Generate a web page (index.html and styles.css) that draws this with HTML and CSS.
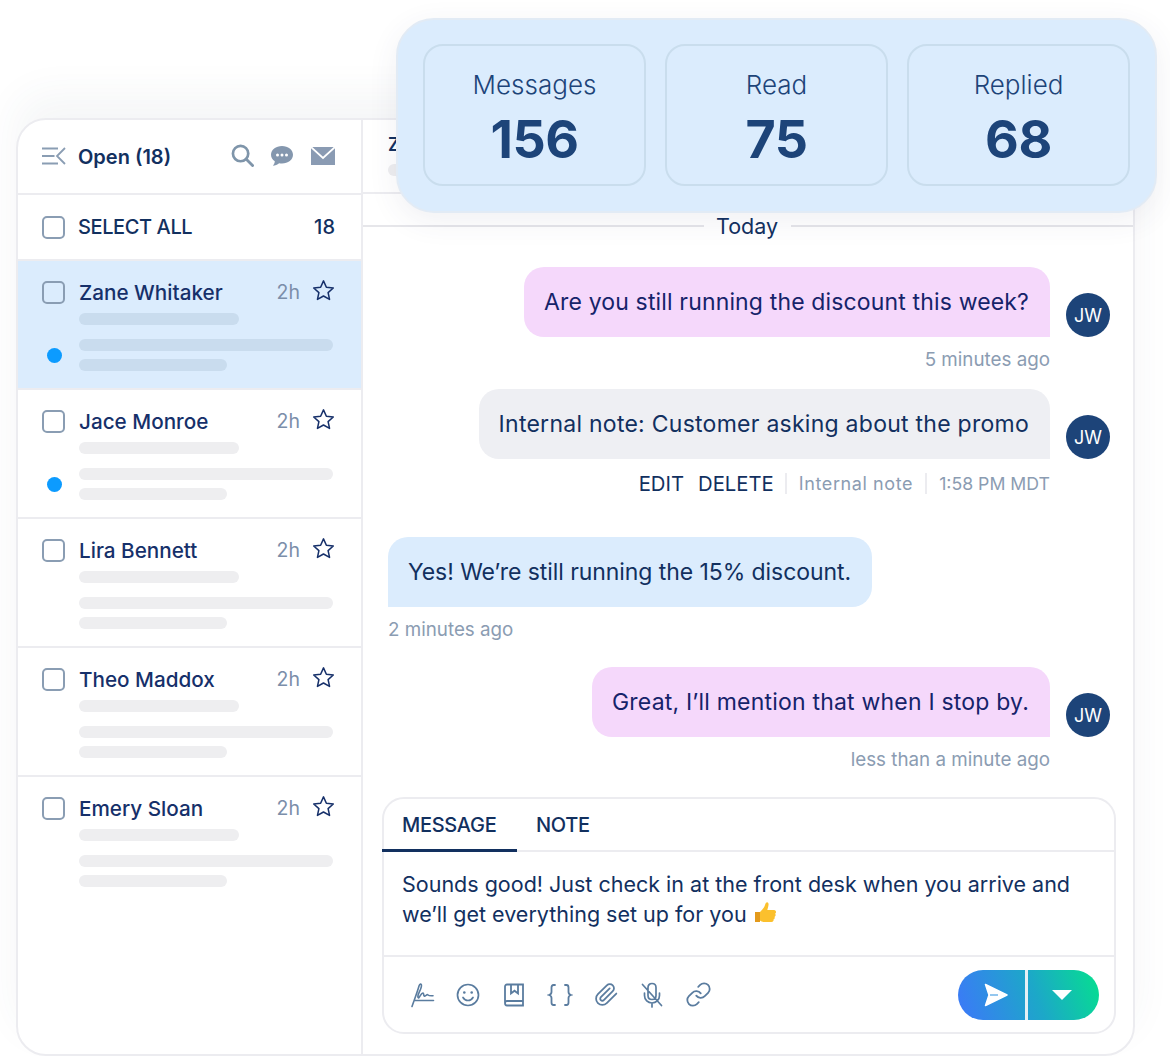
FILE: index.html
```html
<!DOCTYPE html>
<html lang="en">
<head>
<meta charset="utf-8">
<title>Inbox</title>
<link rel="stylesheet" href="styles.css">
</head>
<body>
<div class="page">
  <section class="stats">
    <div class="stat"><div class="stat-label">Messages</div><div class="stat-num">156</div></div>
    <div class="stat"><div class="stat-label">Read</div><div class="stat-num">75</div></div>
    <div class="stat"><div class="stat-label">Replied</div><div class="stat-num">68</div></div>
  </section>
  <main class="frame">
    <aside class="side">
      <header class="side-head">
        <svg class="ic-menu" viewBox="0 0 24 18" width="24" height="18"><path d="M0 1.500h16M0 9h12.500M0 16.500h16M23 1l-8 8 8 8" fill="none" stroke="#8a9db3" stroke-width="1.800"/></svg>
        <span class="open">Open (18)</span>
        <svg class="ic-search" viewBox="0 0 24 24" width="23" height="23"><circle cx="10" cy="10" r="8" fill="none" stroke="#7f95aa" stroke-width="2.800"/><path d="M16 16l6.500 6.500" stroke="#7f95aa" stroke-width="3" stroke-linecap="round"/></svg>
        <svg class="ic-chat" viewBox="0 0 24 22" width="24" height="22"><path d="M12 1C5.900 1 1 4.900 1 9.700c0 2.600 1.500 5 3.800 6.600-.1 1.700-.9 3.300-1.900 4.500 2.300-.2 4.500-1.200 6.200-2.600.9.200 1.900.3 2.900.3 6.100 0 11-3.900 11-8.800S18.100 1 12 1z" fill="#8497ae"/><circle cx="7.500" cy="10" r="1.500" fill="#fff"/><circle cx="12" cy="10" r="1.500" fill="#fff"/><circle cx="16.500" cy="10" r="1.500" fill="#fff"/></svg>
        <svg class="ic-mail" viewBox="0 0 24 18" width="24" height="18"><path d="M0 0h24v18H0z" fill="#8a9bb3"/><path d="M0 0l12 11L24 0" fill="none" stroke="#fff" stroke-width="1.800"/></svg>
      </header>
      <div class="select-all">
        <span class="check"></span>
        <span class="select-label">SELECT ALL</span>
        <span class="select-count">18</span>
      </div>
      <article class="item item-active">
        <div class="item-left"><span class="check"></span><span class="dot"></span></div>
        <div class="item-body">
          <div class="item-top"><span class="name">Zane Whitaker</span><span class="age">2h</span><svg class="star" viewBox="0 0 24 24" width="23" height="23"><path d="M12 2l3 6.600 7.200.8-5.400 4.800 1.500 7.100L12 17.700l-6.300 3.600 1.500-7.100L1.800 9.400 9 8.600z" fill="none" stroke="#16306a" stroke-width="1.600" stroke-linejoin="round"/></svg></div>
          <div class="bar bar-a"></div><div class="bar bar-b"></div><div class="bar bar-c"></div>
        </div>
      </article>
      <article class="item">
        <div class="item-left"><span class="check"></span><span class="dot"></span></div>
        <div class="item-body">
          <div class="item-top"><span class="name">Jace Monroe</span><span class="age">2h</span><svg class="star" viewBox="0 0 24 24" width="23" height="23"><path d="M12 2l3 6.600 7.200.8-5.400 4.800 1.500 7.100L12 17.700l-6.300 3.600 1.500-7.100L1.800 9.400 9 8.600z" fill="none" stroke="#16306a" stroke-width="1.600" stroke-linejoin="round"/></svg></div>
          <div class="bar bar-a"></div><div class="bar bar-b"></div><div class="bar bar-c"></div>
        </div>
      </article>
      <article class="item">
        <div class="item-left"><span class="check"></span></div>
        <div class="item-body">
          <div class="item-top"><span class="name">Lira Bennett</span><span class="age">2h</span><svg class="star" viewBox="0 0 24 24" width="23" height="23"><path d="M12 2l3 6.600 7.200.8-5.400 4.800 1.500 7.100L12 17.700l-6.300 3.600 1.500-7.100L1.800 9.400 9 8.600z" fill="none" stroke="#16306a" stroke-width="1.600" stroke-linejoin="round"/></svg></div>
          <div class="bar bar-a"></div><div class="bar bar-b"></div><div class="bar bar-c"></div>
        </div>
      </article>
      <article class="item">
        <div class="item-left"><span class="check"></span></div>
        <div class="item-body">
          <div class="item-top"><span class="name">Theo Maddox</span><span class="age">2h</span><svg class="star" viewBox="0 0 24 24" width="23" height="23"><path d="M12 2l3 6.600 7.200.8-5.400 4.800 1.500 7.100L12 17.700l-6.300 3.600 1.500-7.100L1.800 9.400 9 8.600z" fill="none" stroke="#16306a" stroke-width="1.600" stroke-linejoin="round"/></svg></div>
          <div class="bar bar-a"></div><div class="bar bar-b"></div><div class="bar bar-c"></div>
        </div>
      </article>
      <article class="item item-last">
        <div class="item-left"><span class="check"></span></div>
        <div class="item-body">
          <div class="item-top"><span class="name">Emery Sloan</span><span class="age">2h</span><svg class="star" viewBox="0 0 24 24" width="23" height="23"><path d="M12 2l3 6.600 7.200.8-5.400 4.800 1.500 7.100L12 17.700l-6.300 3.600 1.500-7.100L1.800 9.400 9 8.600z" fill="none" stroke="#16306a" stroke-width="1.600" stroke-linejoin="round"/></svg></div>
          <div class="bar bar-a"></div><div class="bar bar-b"></div><div class="bar bar-c"></div>
        </div>
      </article>
    </aside>
    <section class="chat">
      <header class="chat-head"><div class="chat-name">Z</div><div class="bar chat-bar"></div></header>
      <div class="today"><span class="today-label">Today</span></div>
      <div class="thread">
        <div class="row row-first">
          <div class="bubble bubble-out">Are you still running the discount this week?</div>
          <div class="avatar">JW</div>
        </div>
        <div class="time time-out">5 minutes ago</div>
        <div class="row row-note">
          <div class="bubble bubble-note">Internal note: Customer asking about the promo</div>
          <div class="avatar">JW</div>
        </div>
        <div class="meta">
          <span class="meta-link">EDIT</span><span class="meta-link meta-delete">DELETE</span>
          <span class="meta-info meta-note">Internal note</span><span class="meta-info meta-clock">1:58 PM MDT</span>
        </div>
        <div class="row row-in">
          <div class="bubble bubble-in">Yes! We’re still running the 15% discount.</div>
        </div>
        <div class="time">2 minutes ago</div>
        <div class="row row-last">
          <div class="bubble bubble-out">Great, I’ll mention that when I stop by.</div>
          <div class="avatar">JW</div>
        </div>
        <div class="time time-out">less than a minute ago</div>
      </div>
      <div class="composer">
        <div class="tabs"><span class="tab tab-active">MESSAGE</span><span class="tab">NOTE</span></div>
        <div class="draft">Sounds good! Just check in at the front desk when you arrive and<br>we’ll get everything set up for you <svg class="thumb" viewBox="0 0 24 24" width="24" height="24"><path d="M2 11h5v10H2z" fill="#e39a1c"/><path d="M7 11c2-2 4-4 5-7 .4-1.600 1.400-3 2.600-2.600 1.500.5 1 3 .4 5l-.7 2.600H21c1.500 0 2 1 2 2s-.5 1.500-1 1.800c.5.400.8 1 .6 1.800-.2.700-.6 1.100-1.100 1.300.3.500.4 1.100.1 1.700-.3.600-.7.900-1.200 1 .2.500.2 1-.1 1.500-.4.600-1 .9-1.800.9H11c-2 0-3-.8-4-1.500z" fill="#fbc02d"/></svg></div>
        <div class="tools">
          <span class="tool"><svg viewBox="0 0 26 26" width="26" height="26"><path d="M3 24.500C6 16 9 8 10 4c.8-2.800 3-2.500 2.300.8C11.500 9 8 13 9 15.500c1 2 3-5 5-4.500 1.200.4.200 3.800 2 3 1.800-.8 2-2 3-1 1 1 3 .7 5 .8M6 18.500h18.500" fill="none" stroke="#5a7c9f" stroke-width="1.600" stroke-linecap="round"/></svg></span>
          <span class="tool"><svg viewBox="0 0 24 24" width="24" height="24"><circle cx="12" cy="12" r="10.500" fill="none" stroke="#5a7c9f" stroke-width="1.700"/><circle cx="8.300" cy="9.500" r="1.300" fill="#5a7c9f"/><circle cx="15.700" cy="9.500" r="1.300" fill="#5a7c9f"/><path d="M7 14.500c1.200 2 3 3 5 3s3.800-1 5-3" fill="none" stroke="#5a7c9f" stroke-width="1.700" stroke-linecap="round"/></svg></span>
          <span class="tool"><svg viewBox="0 0 22 24" width="22" height="24"><path d="M2 20V3.500C2 2.300 2.800 1.500 4 1.500h16V18H4c-1.200 0-2 .8-2 2s.8 2.500 2 2.500h16V18M8 1.500v9l3.500-2.800 3.500 2.800v-9" fill="none" stroke="#5a7c9f" stroke-width="1.800"/></svg></span>
          <span class="tool"><svg viewBox="0 0 26 24" width="26" height="24"><path d="M8 2H6.500C5 2 4.500 3 4.500 4.500V9c0 1.500-.8 2.500-2.500 3 1.700.5 2.500 1.500 2.500 3v4.500c0 1.500.5 2.500 2 2.500H8M18 2h1.500C21 2 21.500 3 21.500 4.500V9c0 1.500.8 2.500 2.500 3-1.700.5-2.500 1.500-2.500 3v4.500c0 1.500-.5 2.500-2 2.500H18" fill="none" stroke="#5a7c9f" stroke-width="1.800" stroke-linecap="round"/></svg></span>
          <span class="tool"><svg viewBox="0 0 24 24" width="25" height="25"><path d="M21.440 11.050l-9.190 9.190a6 6 0 0 1-8.490-8.490l8.570-8.570A4 4 0 1 1 18 8.840l-8.590 8.570a2 2 0 0 1-2.830-2.830l8.490-8.480" fill="none" stroke="#5a7c9f" stroke-width="1.700" stroke-linecap="round" stroke-linejoin="round"/></svg></span>
          <span class="tool"><svg viewBox="0 0 24 26" width="24" height="26"><path d="M8 5.500C8 3 9.800 1.500 12 1.500S16 3 16 5.500v8c0 2.500-1.800 4-4 4s-4-1.500-4-4zM4.500 11v2.500c0 4.500 3.500 7.500 7.500 7.500s7.500-3 7.500-7.500V11M12 21v4M2.500 2.500l19 21" fill="none" stroke="#5a7c9f" stroke-width="1.700" stroke-linecap="round"/></svg></span>
          <span class="tool"><svg viewBox="0 0 24 24" width="27" height="27"><path d="M10 13a5 5 0 0 0 7.540.54l3-3a5 5 0 0 0-7.070-7.070l-1.720 1.710M14 11a5 5 0 0 0-7.540-.54l-3 3a5 5 0 0 0 7.070 7.070l1.710-1.710" fill="none" stroke="#5a7c9f" stroke-width="1.600" stroke-linecap="round" stroke-linejoin="round"/></svg></span>
          <div class="send">
            <button class="send-main" type="button" aria-label="Send"><svg viewBox="0 0 24 24" width="24" height="24"><path d="M1.500 1.500L23 12 1.500 22.500 5 12z" fill="#fff" stroke="#fff" stroke-width="1.500" stroke-linejoin="round"/><path d="M6 12h8" stroke="#2a8fe0" stroke-width="1.200"/></svg></button>
            <button class="send-more" type="button" aria-label="More"><svg viewBox="0 0 20 10" width="20" height="10"><path d="M0 0h20L10 10z" fill="#fff"/></svg></button>
          </div>
        </div>
      </div>
    </section>
  </main>
</div>
</body>
</html>
```

FILE: styles.css
```css
* { box-sizing: border-box; }
html, body { margin: 0; background: #fff; }
body { font-family: Inter, "Liberation Sans", sans-serif; color: #12305f; }
.page { position: relative; width: 1170px; height: 1056px; padding: 118px 35px 0 16px; overflow: hidden; }

.stats {
  position: absolute; left: 396px; top: 18px; z-index: 2;
  width: 761px; height: 195px; padding: 24px 25px 25px;
  display: grid; grid-template-columns: repeat(3, 1fr); gap: 19px;
  background: #dbecfd; border: 2px solid #e2ebf5; border-radius: 38px;
  box-shadow: 0 8px 30px rgba(60, 70, 100, .08);
}
.stat {
  border: 2px solid #c9dded; border-radius: 20px;
  display: flex; flex-direction: column; align-items: center;
  padding-top: 23px;
}
.stat-label { font-size: 26px; line-height: 32px; color: #1d4479; font-weight: 300; }
.stat-num { font-size: 52px; line-height: 62px; font-weight: 700; color: #1d4479; margin-top: 8px; letter-spacing: -.4px; }

.frame {
  height: 938px; display: flex; background: #fff;
  border: 2px solid #ececf0; border-radius: 30px; overflow: hidden;
  box-shadow: 0 -24px 40px rgba(60, 70, 100, .05);
}
.side { width: 345px; flex: none; border-right: 2px solid #ececf0; }
.side-head {
  height: 75px; display: flex; align-items: center; padding: 0 26px 0 24px;
  border-bottom: 2px solid #ececf0;
}
.open { font-size: 20px; font-weight: 600; margin-left: 12px; flex: 1; color: #12305f; }
.ic-mail { margin-left: 17px; }
.ic-chat { margin-left: 16px; }
.ic-search { margin-top: -3px; }
.ic-menu { margin-top: -1px; }
.ic-chat, .ic-mail { margin-top: -2px; }
.select-all {
  height: 66px; display: flex; align-items: center; padding: 0 26px 0 24px;
  border-bottom: 2px solid #ececf0;
}
.check { display: block; width: 23px; height: 23px; flex: none; border: 2px solid #8a9db3; border-radius: 5px; background: transparent; }
.select-label { font-size: 20px; font-weight: 500; margin-left: 13px; flex: 1; letter-spacing: -.4px; }
.select-count { font-size: 20px; font-weight: 500; }
.item { height: 129px; display: flex; padding: 20px 27px 0 24px; border-bottom: 2px solid #ececf0; }
.item-last { border-bottom: 0; }
.item-active { background: #dbecfd; }
.item-left { width: 37px; flex: none; display: flex; flex-direction: column; }
.dot { display: block; width: 15px; height: 15px; border-radius: 50%; background: #0c9bff; margin: 44px 0 0 5px; }
.item-body { flex: 1; min-width: 0; }
.item-top { display: flex; align-items: center; height: 22px; }
.name { flex: 1; font-size: 20.7px; font-weight: 500; color: #16306a; }
.age { font-size: 19.5px; color: #7b8eaa; margin-right: 12px; }
.star { margin: -3px -1px 0 0; }
.bar { height: 12px; border-radius: 6px; background: #eeeef0; }
.item-active .bar { background: #c9dcee; }
.bar-a { width: 160px; margin-top: 10px; }
.bar-b { width: 254px; margin-top: 14px; }
.bar-c { width: 148px; margin-top: 8px; }

.chat { flex: 1; min-width: 0; display: flex; flex-direction: column; }
.chat-head { height: 74px; padding: 14px 0 0 25px; border-bottom: 2px solid #ececf0; flex: none; }
.chat-name { font-size: 18px; font-weight: 600; line-height: 22px; }
.chat-bar { width: 160px; margin-top: 8px; }
.today { height: 24px; margin-top: 20px; display: flex; align-items: center; flex: none; }
.today::before, .today::after { content: ""; height: 2px; background: #e6e6ea; flex: 1; }
.today::before { flex: none; width: 341px; }
.today-label { font-size: 21.500px; padding: 0 13px 0 12px; color: #12305f; }

.thread { padding: 0 23px 0 25px; display: flex; flex-direction: column; }
.row { display: flex; justify-content: flex-end; align-items: flex-end; gap: 16px; }
.row-first { margin-top: 29px; }
.row-note { margin-top: 18px; }
.row-in { margin-top: 43px; justify-content: flex-start; }
.row-last { margin-top: 26px; }
.bubble { height: 70px; padding: 0 21px 1px 20px; display: flex; align-items: center; font-size: 23px; border-radius: 20px; letter-spacing: .2px; }
.bubble-out { background: #f5d8fb; color: #16236a; border-bottom-right-radius: 0; }
.row-first .bubble-out { letter-spacing: .15px; }
.bubble-note { background: #eeeff3; color: #12305f; border-bottom-right-radius: 0; letter-spacing: .26px; }
.bubble-in { background: #dbecfd; color: #12305f; border-bottom-left-radius: 0; letter-spacing: -.07px; }
.avatar { width: 44px; height: 44px; border-radius: 50%; background: #1d4479; color: #fff; display: flex; align-items: center; justify-content: center; font-size: 18px; font-weight: 400; flex: none; }
.time { font-size: 18.800px; line-height: 22px; color: #8b9cb2; margin-top: 12px; }
.time-out { text-align: right; margin-right: 60px; }
.meta { display: flex; justify-content: flex-end; align-items: center; height: 22px; margin: 13px 60px 0 0; }
.meta-link { font-size: 20.300px; color: #12305f; }
.meta-delete { margin-left: 14px; }
.meta-info { font-size: 18px; color: #8b9cb2; margin-left: 12px; padding-left: 12px; border-left: 2px solid #ececf0; }
.meta-note { letter-spacing: .6px; margin-left: 11px; }
.meta-clock { font-size: 17.700px; }

.composer { margin: 26px 17px 0 19px; height: 237px; border: 2px solid #ececf0; border-radius: 22px; display: flex; flex-direction: column; }
.tabs { height: 53px; display: flex; border-bottom: 2px solid #ececf0; flex: none; }
.tab { font-size: 20px; font-weight: 500; padding: 0 19px 2px; display: flex; align-items: center; height: 53px; letter-spacing: -.3px; }
.tab-active { width: 135px; margin-left: -2px; padding: 1px 0 0 20px; border-bottom: 3px solid #12305f; }
.draft { padding: 17px 18px 0; height: 105px; font-size: 21.500px; line-height: 30px; color: #12305f; flex: none; border-bottom: 2px solid #ececf0; }
.thumb { vertical-align: -3px; }
.tools { flex: 1; display: flex; align-items: center; padding: 0 15px 0 15px; }
.tool { width: 46px; display: flex; justify-content: center; align-items: center; flex: none; }
.send { margin-left: auto; display: flex; gap: 3px; width: 141px; height: 50px; border-radius: 25px; overflow: hidden; background: linear-gradient(70deg, #3a7cf5 5%, #1ca8c8 55%, #05e08e 100%); }
.send button { border: 0; padding: 0; display: flex; align-items: center; justify-content: center; background: transparent; }
.send-main { width: 67px; padding-left: 8px !important; box-shadow: 3px 0 0 #e6f0f5; }
.send-more { flex: 1; padding-right: 3px !important; }
```
